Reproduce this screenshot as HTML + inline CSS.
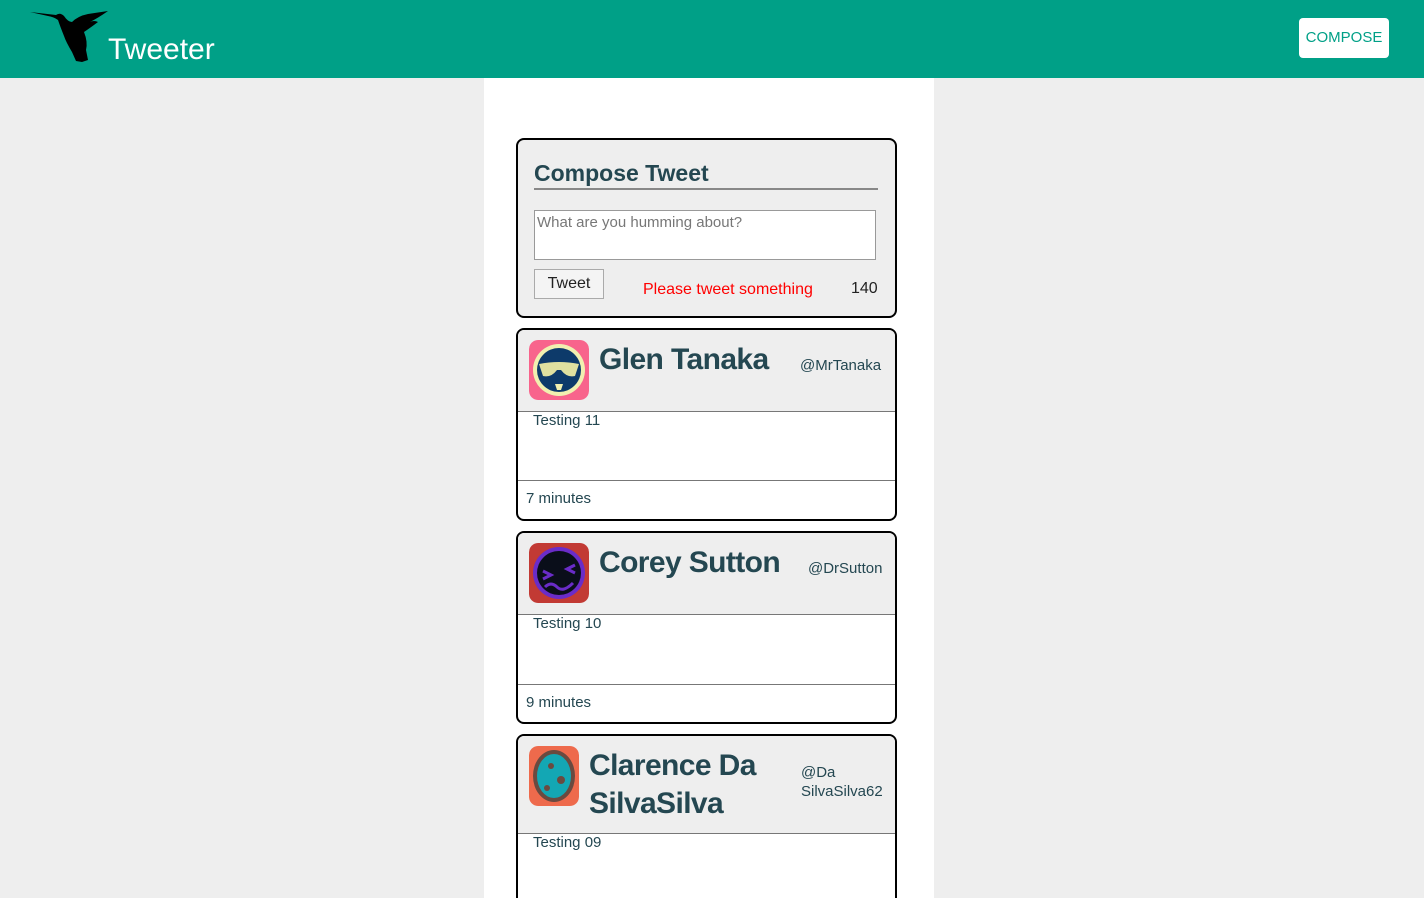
<!DOCTYPE html>
<html style="overflow:hidden;height:898px"><head><style>
*{box-sizing:border-box;margin:0;padding:0}
body{width:1424px;height:898px;background:#eeeeee;font-family:"Liberation Sans",sans-serif;position:relative;overflow:hidden;color:#244751}
.abs{position:absolute}
header{position:absolute;left:0;top:0;width:1424px;height:78px;background:#00a087}
.main{position:absolute;left:484px;top:78px;width:450px;height:820px;background:#fff}
.box{position:absolute;left:516px;width:381px;border:2px solid #000;border-radius:8px;background:#eee;overflow:hidden}
.tweet{background:#fff}
.tweet .hd{position:absolute;left:0;top:0;right:0;background:#eee;border-bottom:1px solid #777}
.name{position:absolute;font-weight:bold;font-size:30px;color:#244751;line-height:38px;letter-spacing:-0.6px}
.handle{position:absolute;font-size:15px;color:#244751}
.av{position:absolute;left:11px;top:10px;width:60px;height:60px;border-radius:9px}
.txt{position:absolute;left:15px;font-size:15px;color:#244751}
</style></head><body>
<header>
<svg class="abs" style="left:28px;top:6px" width="82" height="58" viewBox="0 0 82 58">
<path d="M2 6 L28 9 Q32 6 36 10 Q40 16 44 16 Q50 10 60 8 L80 5 Q70 12 62 16 Q66 14 70 16 Q62 22 56 26 Q60 36 58 44 L60 54 L54 56 L48 55 L44 46 Q38 36 36 30 Q32 20 30 14 Q26 11 20 10 Z" fill="#000"/>
</svg>
<div class="abs" style="left:108px;top:33px;font-size:30px;color:#fff">Tweeter</div>
<div class="abs" style="left:1299px;top:18px;width:90px;height:40px;background:#fff;border-radius:4px;color:#00a087;font-size:15px;line-height:40px;text-align:center">COMPOSE</div>
</header>
<div class="main"></div>

<div class="box" style="top:138px;height:180px">
<div class="abs" style="left:16px;top:20px;font-size:23px;font-weight:bold;color:#244751">Compose Tweet</div>
<div class="abs" style="left:16px;top:48px;width:344px;height:2px;background:#888"></div>
<div class="abs" style="left:16px;top:70px;width:342px;height:50px;background:#fff;border:1px solid #999;font-size:15px;color:#777;padding:3px 2px">What are you humming about?</div>
<div class="abs" style="left:16px;top:129px;width:70px;height:30px;background:#f4f4f4;border:1px solid #aaa;font-size:16px;color:#222;text-align:center;line-height:28px">Tweet</div>
<div class="abs" style="left:125px;top:141px;font-size:16px;color:#f00">Please tweet something</div>
<div class="abs" style="left:333px;top:140px;font-size:16px;color:#222">140</div>
</div>

<div class="box tweet" style="top:328px;height:193px">
<div class="hd" style="height:82px">
<svg class="av" viewBox="0 0 60 60"><rect width="60" height="60" rx="9" fill="#f8648c"/><circle cx="30" cy="30" r="26" fill="#f1f0b0"/><circle cx="30" cy="30" r="22" fill="#0d3a6a"/><path d="M10 24 Q30 20 50 24 L46 36 Q38 38 32 30 L28 30 Q22 38 14 36 Z" fill="#dfe0a0"/><path d="M26 44 L34 44 L32 50 L28 50Z" fill="#f1f0b0"/></svg>
<div class="name" style="left:81px;top:11px">Glen Tanaka</div>
<div class="handle" style="left:282px;top:27px">@MrTanaka</div>
</div>
<div class="txt" style="top:82px">Testing 11</div>
<div class="abs" style="left:0;right:0;top:150px;height:1px;background:#777"></div>
<div class="abs" style="left:8px;top:160px;font-size:15px">7 minutes</div>
</div>

<div class="box tweet" style="top:531px;height:193px">
<div class="hd" style="height:82px">
<svg class="av" viewBox="0 0 60 60"><rect width="60" height="60" rx="9" fill="#c23a34"/><circle cx="30" cy="30" r="26" fill="#6a2cc8"/><circle cx="30" cy="30" r="22" fill="#0a0e1a"/><path d="M14 28 L22 32 L14 36 M46 22 L38 26 L46 30 M16 44 Q22 38 28 44 Q34 50 44 40" stroke="#6a2cc8" stroke-width="3" fill="none"/></svg>
<div class="name" style="left:81px;top:11px">Corey Sutton</div>
<div class="handle" style="left:290px;top:27px">@DrSutton</div>
</div>
<div class="txt" style="top:82px">Testing 10</div>
<div class="abs" style="left:0;right:0;top:151px;height:1px;background:#777"></div>
<div class="abs" style="left:8px;top:161px;font-size:15px">9 minutes</div>
</div>

<div class="box tweet" style="top:734px;height:180px">
<div class="hd" style="height:98px">
<svg class="av" style="width:50px" viewBox="0 0 50 60"><rect width="50" height="60" rx="9" fill="#ee6a4c"/><ellipse cx="25" cy="30" rx="21" ry="26" fill="#6a4a40"/><ellipse cx="25" cy="30" rx="17" ry="22" fill="#13a7b4"/><circle cx="22" cy="20" r="3" fill="#6a4a40"/><circle cx="32" cy="34" r="4" fill="#6a4a40"/><circle cx="18" cy="42" r="3" fill="#6a4a40"/></svg>
<div class="name" style="left:71px;top:11px">Clarence Da<br>SilvaSilva</div>
<div class="handle" style="left:283px;top:27px;line-height:19px">@Da<br>SilvaSilva62</div>
</div>
<div class="txt" style="top:98px">Testing 09</div>
</div>
</body></html>
